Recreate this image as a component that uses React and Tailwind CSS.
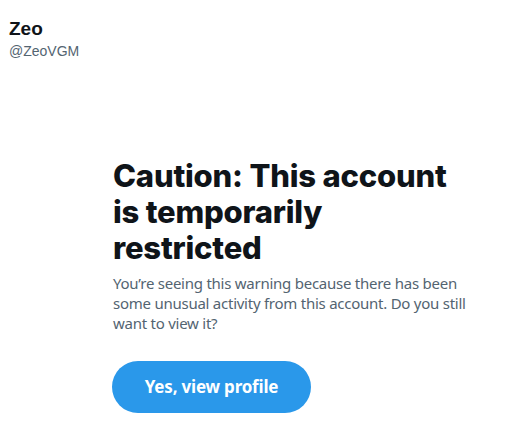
export default function App() {
  return (
    <div className="w-[523px] h-[446px] bg-white overflow-hidden">
      <div className="pl-[9px] pt-[17px]">
        <div className="text-[19px] leading-[24px] font-bold text-[#0f1419] font-['Liberation_Sans',sans-serif]">Zeo</div>
        <div className="text-[14px] leading-[18px] text-[#536471] font-['Liberation_Sans',sans-serif] mt-[1px]">@ZeoVGM</div>
      </div>
      <div className="pl-[113px] pt-[98px] w-[480px]">
        <div className="w-[362px]">
          <h1 className="text-[31px] leading-[36px] font-extrabold text-[#0f1419] font-['Inter',sans-serif] tracking-[-0.2px]">
            Caution: This account is temporarily restricted
          </h1>
          <p className="mt-[7px] text-[15px] leading-[20px] text-[#536471] font-['Noto_Sans',sans-serif] tracking-[-0.25px]">
            You’re seeing this warning because there has been some unusual activity from this account. Do you still want to view it?
          </p>
          <button className="mt-[28px] h-[52px] w-[199px] rounded-full bg-[#2a98ea] text-white text-[17px] font-bold font-['Noto_Sans',sans-serif] tracking-[-0.2px] -ml-px">
            Yes, view profile
          </button>
        </div>
      </div>
    </div>
  );
}
